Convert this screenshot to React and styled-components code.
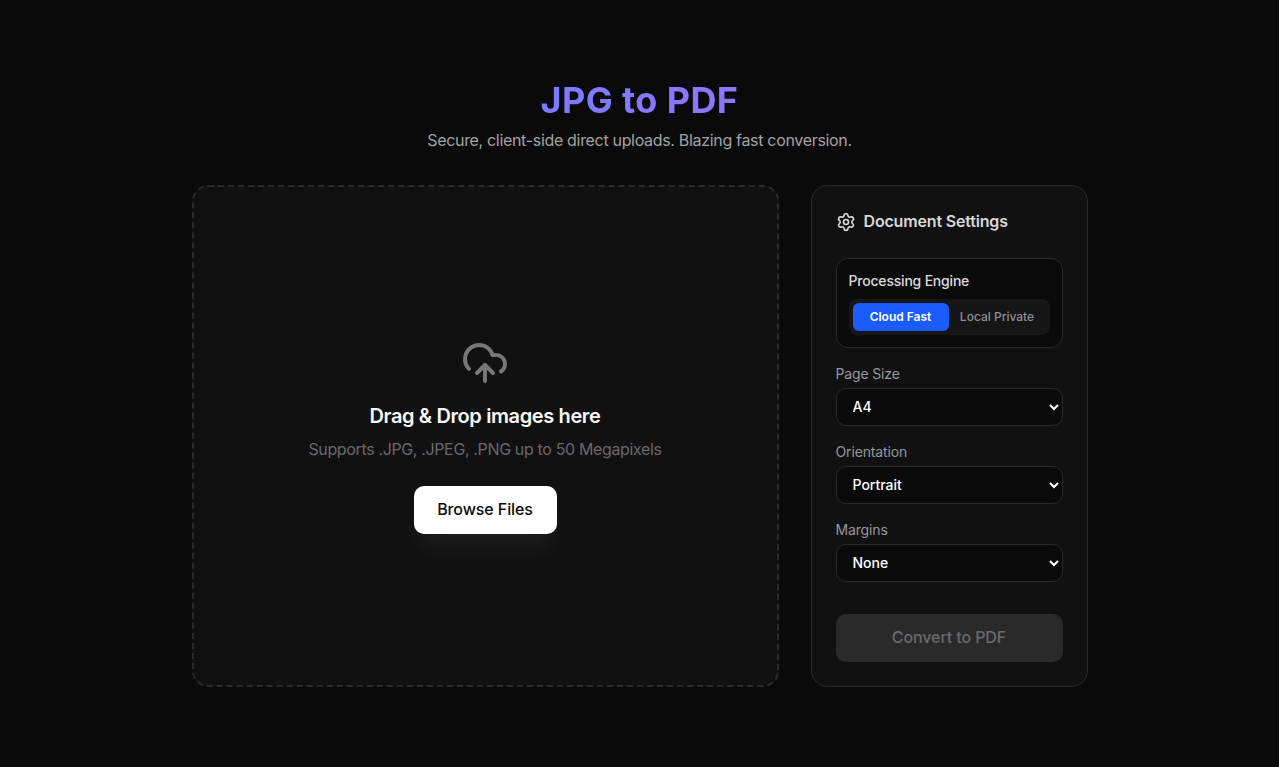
import React from "react";
import styled, { createGlobalStyle } from "styled-components";
import { CloudUpload, Settings } from "lucide-react";

const Global = createGlobalStyle`
  html, body { margin: 0; padding: 0; background: #0a0a0a; }
  body { font-family: Inter, "Liberation Sans", sans-serif; color: #fff; color-scheme: dark; }
  * { box-sizing: border-box; }
`;
const Page = styled.main`
  width: 896px; height: 767px; margin: 0 auto; padding-top: 80px;
  display: flex; flex-direction: column;
`;
const Header = styled.header`
  display: flex; flex-direction: column; align-items: center; height: 105px;
`;
const Title = styled.h1`
  margin: 0; font-size: 36px; line-height: 40px; font-weight: 700; letter-spacing: 0.4px;
  background: linear-gradient(90deg, #7a7aff, #8f76ff);
  -webkit-background-clip: text; background-clip: text; color: transparent;
`;
const Subtitle = styled.p`
  margin: 8px 0 0; font-size: 16px; line-height: 24px; color: #a3a3a3; letter-spacing: -0.32px;
`;
const Columns = styled.div`
  display: grid; grid-template-columns: 587px 277px; column-gap: 32px; height: 502px;
`;
const Drop = styled.section`
  background: #111112; border: 2px dashed #2c2c2e; border-radius: 16px;
  display: flex; flex-direction: column; align-items: center; justify-content: center;
`;
const CloudIcon = styled(CloudUpload)`
  color: #77777a; display: block;
`;
const DropTitle = styled.h3`
  margin: 15px 0 0; font-size: 20px; line-height: 28px; font-weight: 600; color: #fafafa; letter-spacing: -0.38px;
`;
const DropHint = styled.p`
  margin: 7px 0 0; font-size: 16px; line-height: 24px; color: #68686c; letter-spacing: -0.36px;
`;
const Browse = styled.button`
  margin-top: 25px; width: 143px; height: 48px; border: 0; border-radius: 10px; background: #fff; color: #0a0a0a;
  font: 500 16px/22px Inter, "Liberation Sans", sans-serif; letter-spacing: -0.1px; padding: 0 0 2px;
  box-shadow: 0 20px 25px -5px rgba(255,255,255,0.05);
`;
const Panel = styled.aside`
  background: #111112; border: 1px solid #29292b; border-radius: 16px; padding: 24px;
  display: flex; flex-direction: column;
`;
const PanelHead = styled.div`
  display: flex; align-items: center; gap: 8px; height: 24px; margin-bottom: 24px;
`;
const PanelTitle = styled.h2`
  margin: -2px 0 0; font-size: 16px; line-height: 24px; font-weight: 600; color: #d8d8da; letter-spacing: -0.17px;
`;
const GearIcon = styled(Settings)`
  color: #d8d8da; display: block;
`;
const Engine = styled.div`
  background: #0a0a0a; border: 1px solid #29292b; border-radius: 12px; height: 90px; padding: 12px; margin-bottom: 16px;
`;
const EngineLabel = styled.div`
  font-size: 14px; line-height: 20px; font-weight: 500; color: #dcdcde; letter-spacing: -0.2px; margin-bottom: 8px;
`;
const Toggle = styled.div`
  display: grid; grid-template-columns: 96px 1fr; height: 36px; padding: 4px; border-radius: 8px; background: #161617;
`;
const ToggleOption = styled.button`
  border: 0; border-radius: 6px; padding: 0;
  font: 600 12px/16px Inter, "Liberation Sans", sans-serif;
  background: ${p => (p.$active ? "#1a5cff" : "transparent")};
  color: ${p => (p.$active ? "#fff" : "#8e8e93")};
  font-weight: ${p => (p.$active ? 600 : 500)};
`;
const Field = styled.div`
  display: flex; flex-direction: column; margin-bottom: 16px;
`;
const FieldLabel = styled.label`
  font-size: 14px; line-height: 20px; color: #98989c; margin-bottom: 4px; letter-spacing: -0.15px;
`;
const Select = styled.select`
  width: 100%; height: 38px; padding: 0 8px 1px 12px; border: 1px solid #29292b; border-radius: 10px;
  background: #0a0a0a; color: #fff; font: 500 14px Inter, "Liberation Sans", sans-serif; color-scheme: dark;
`;
const Convert = styled.button`
  margin-top: 16px; height: 48px; width: 100%; border: 0; border-radius: 10px; background: #2a2a2b; color: #6a6a6b;
  font: 500 16px/22px Inter, "Liberation Sans", sans-serif; letter-spacing: -0.1px; padding: 0 0 2px;
`;

const fields = [
  { label: "Page Size", value: "A4" },
  { label: "Orientation", value: "Portrait" },
  { label: "Margins", value: "None" },
];

export default function App() {
  return (
    <Page>
      <Global />
      <Header>
        <Title>JPG to PDF</Title>
        <Subtitle>Secure, client-side direct uploads. Blazing fast conversion.</Subtitle>
      </Header>
      <Columns>
        <Drop>
          <CloudIcon size={48} strokeWidth={2} />
          <DropTitle>Drag &amp; Drop images here</DropTitle>
          <DropHint>Supports .JPG, .JPEG, .PNG up to 50 Megapixels</DropHint>
          <Browse>Browse Files</Browse>
        </Drop>
        <Panel>
          <PanelHead>
            <GearIcon size={20} strokeWidth={2} />
            <PanelTitle>Document Settings</PanelTitle>
          </PanelHead>
          <Engine>
            <EngineLabel>Processing Engine</EngineLabel>
            <Toggle>
              <ToggleOption $active>Cloud Fast</ToggleOption>
              <ToggleOption>Local Private</ToggleOption>
            </Toggle>
          </Engine>
          {fields.map(f => (
            <Field key={f.label}>
              <FieldLabel>{f.label}</FieldLabel>
              <Select defaultValue={f.value}>
                <option>{f.value}</option>
              </Select>
            </Field>
          ))}
          <Convert disabled>Convert to PDF</Convert>
        </Panel>
      </Columns>
    </Page>
  );
}
